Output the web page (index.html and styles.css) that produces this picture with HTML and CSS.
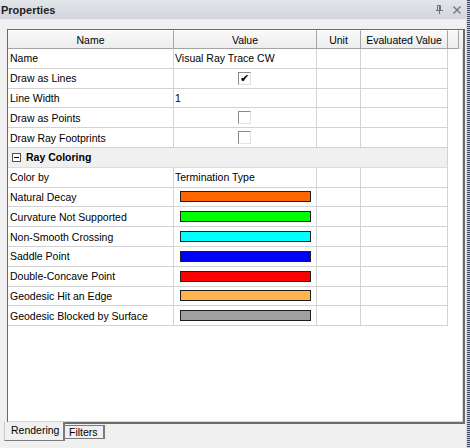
FILE: index.html
```html
<!DOCTYPE html>
<html lang="en">
<head>
  <meta charset="UTF-8" />
  <title>Properties</title>
  <link rel="stylesheet" href="styles.css">
</head>
<body>
  <div class="window">
    <div class="pane">
      <div class="titlebar">
        <span class="title">Properties</span>
        <span class="tools">
          <svg class="pin" width="7" height="9" viewBox="0 0 7 9"><path d="M1.5 .5h3v5h-3z M3.5 .5v5 M0 5.5h7 M3.5 6v3" stroke="#707070" fill="none"/></svg>
          <svg class="close" width="8" height="8" viewBox="0 0 8 8"><path d="M.5 .5l7 7 M7.5 .5l-7 7" stroke="#707070" stroke-width="1.2"/></svg>
        </span>
      </div>

      <div class="content">
        <div class="gridbox">
          <div class="row head">
            <div class="cell">Name</div>
            <div class="cell">Value</div>
            <div class="cell">Unit</div>
            <div class="cell">Evaluated Value</div>
            <div class="cell"></div>
          </div>

          <div class="row"><div class="cell">Name</div><div class="cell val">Visual Ray Trace CW</div><div class="cell"></div><div class="cell"></div></div>
          <div class="row"><div class="cell">Draw as Lines</div><div class="cell val"><span class="check on">&#10004;</span></div><div class="cell"></div><div class="cell"></div></div>
          <div class="row"><div class="cell">Line Width</div><div class="cell val">1</div><div class="cell"></div><div class="cell"></div></div>
          <div class="row"><div class="cell">Draw as Points</div><div class="cell val"><span class="check"></span></div><div class="cell"></div><div class="cell"></div></div>
          <div class="row"><div class="cell">Draw Ray Footprints</div><div class="cell val"><span class="check"></span></div><div class="cell"></div><div class="cell"></div></div>

          <div class="row group">
            <div class="cell"><span class="toggle"></span>Ray Coloring</div>
          </div>

          <div class="row"><div class="cell">Color by</div><div class="cell val">Termination Type</div><div class="cell"></div><div class="cell"></div></div>
          <div class="row"><div class="cell">Natural Decay</div><div class="cell val"><span class="swatch" style="background:#ff6600"></span></div><div class="cell"></div><div class="cell"></div></div>
          <div class="row"><div class="cell">Curvature Not Supported</div><div class="cell val"><span class="swatch" style="background:#00ff00"></span></div><div class="cell"></div><div class="cell"></div></div>
          <div class="row"><div class="cell">Non-Smooth Crossing</div><div class="cell val"><span class="swatch" style="background:#00ffff"></span></div><div class="cell"></div><div class="cell"></div></div>
          <div class="row"><div class="cell">Saddle Point</div><div class="cell val"><span class="swatch" style="background:#0000ff"></span></div><div class="cell"></div><div class="cell"></div></div>
          <div class="row"><div class="cell">Double-Concave Point</div><div class="cell val"><span class="swatch" style="background:#ff0000"></span></div><div class="cell"></div><div class="cell"></div></div>
          <div class="row"><div class="cell">Geodesic Hit an Edge</div><div class="cell val"><span class="swatch" style="background:#ffb450"></span></div><div class="cell"></div><div class="cell"></div></div>
          <div class="row"><div class="cell">Geodesic Blocked by Surface</div><div class="cell val"><span class="swatch" style="background:#a0a0a0"></span></div><div class="cell"></div><div class="cell"></div></div>
        </div>

        <div class="tabs">
          <span class="tab active">Rendering</span>
          <span class="tab">Filters</span>
        </div>
      </div>
    </div>
    <div class="edge"></div>
  </div>
</body>
</html>
```

FILE: styles.css
```css
* { box-sizing: border-box; margin:0; padding:0; }
body {
  font-family: 'Liberation Sans', Arial, sans-serif;
  font-size: 10.5px;
  color: #000;
  background: #f0f0f0;
  width: 470px; height: 448px;
  overflow: hidden;
}
.window { display:flex; height:448px; }
.pane { width:466px; display:flex; flex-direction:column; }

/* title */
.titlebar {
  height: 20px;
  display:flex; justify-content:space-between; align-items:center;
  padding: 0 5px 0 1px;
  background: linear-gradient(#e2e5e9, #d2d6dc);
  border-bottom: 1px solid #e9ebee;
}
.title { font-weight:700; font-size:11px; color:#1e1e1e; }
.tools { display:flex; align-items:center; gap:10px; }
.tools svg { display:block; }

.content { flex:1; padding:9px 1px 0 7px; }

/* grid */
.gridbox {
  height: 395px;
  background: #fff;
  border: 1px solid #6b6b6b;
  border-right-width: 2px; border-bottom-width: 2px;
  box-shadow: inset -1px -1px #d6d6d6;
}
.row {
  display:grid;
  grid-template-columns: 166px 143px 44px 87px;
  height: 19.8px;
}
.cell {
  border-right: 1px solid #d2d2d2;
  border-bottom: 1px solid #d2d2d2;
  padding: 0 2px;
  display:flex; align-items:center;
  white-space: nowrap; overflow:hidden;
}
.cell.val { padding-left: 1px; }

.row.head {
  grid-template-columns: 166px 143px 44px 87px 11px;
  height: 19px;
  background: linear-gradient(#fafafa, #ececec);
}
.row.head .cell {
  justify-content:center;
  border-right-color: #a5a5a5;
  border-bottom-color: #a5a5a5;
  border-top: 1px solid #fff;
}

.row.group { grid-template-columns: 440px; }
.row.group .cell {
  background: #f0f0f0;
  font-weight: 700;
  border-bottom-color: #dcdcdc;
}
.toggle {
  width: 9px; height: 9px;
  margin: 0 5px 0 2px;
  border: 1px solid #505050;
  background: #fff;
  position: relative;
}
.toggle::after {
  content:''; position:absolute;
  left:1px; right:1px; top:3px; height:1px;
  background:#000;
}

.check {
  width: 13px; height: 13px;
  margin-left: 63px;
  background:#fff;
  border: 1px solid #e2e2e2;
  border-top-color: #8a8a8a; border-left-color: #8a8a8a;
  font-size: 11px; font-weight: 700; line-height: 11px; text-align:center;
  font-family: 'DejaVu Sans', sans-serif;
}

.swatch {
  width: 131px; height: 11px;
  margin-left: 5px;
  border: 1px solid #1e1e1e;
}

/* tabs */
.tabs { display:flex; margin:-2px 0 0 -3px; align-items:flex-start; }
.tab {
  background: #f0f0f0;
  border: 1px solid #7a7a7a;
  border-right-width: 2px;
}
.tab.active {
  width: 61px; height: 19px; line-height: 17px;
  padding-left: 6px;
  border-top: none;
  border-left-color: #c8c8c8;
}
.tab:not(.active) {
  width: 40px;
  margin-top: 3px;
  height: 14px; line-height: 12px;
  border-left: none;
  padding-left: 4px;
}

.edge {
  width: 4px;
  border-left: 1px solid #dcdcdc;
  background: repeating-linear-gradient(to bottom, #3e4c70 0 1px, #c4cad4 1px 2px);
}
```
